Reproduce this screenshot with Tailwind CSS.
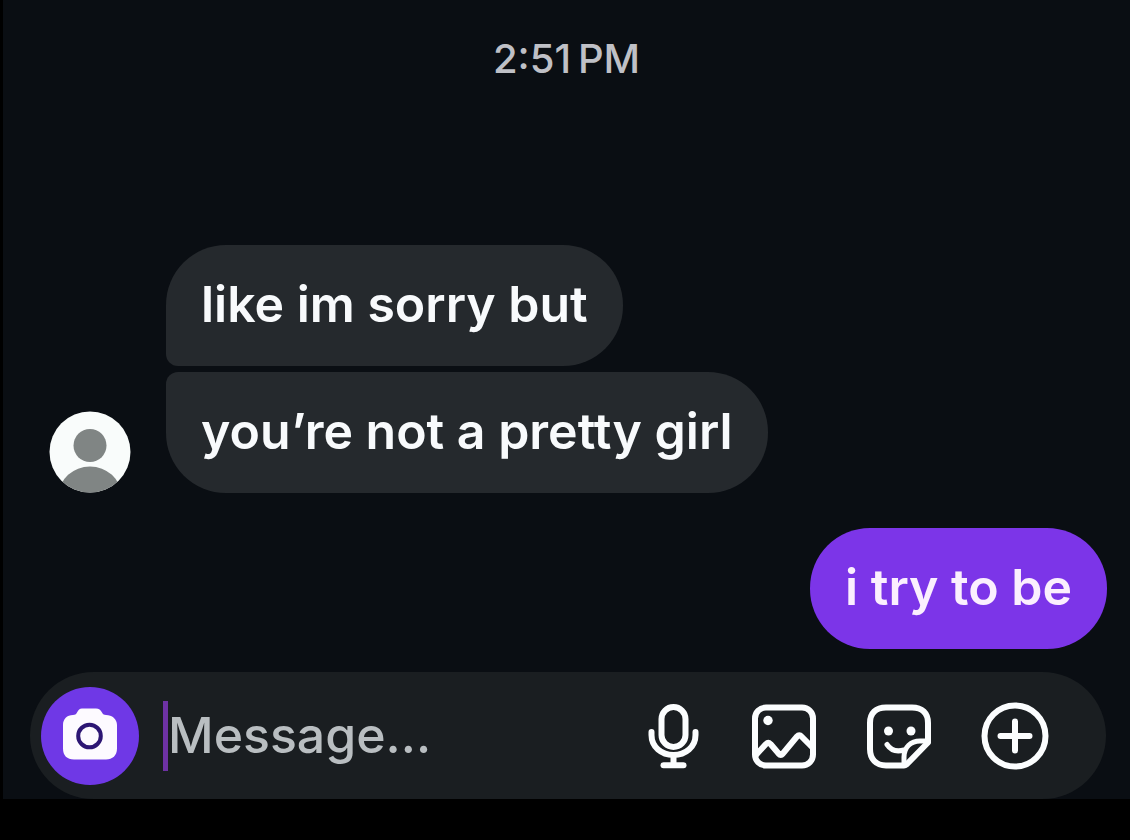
<!DOCTYPE html>
<html lang="en">
  <head>
    <meta charset="utf-8" />
    <title>Direct Messages</title>
    <meta name="viewport" content="width=device-width, initial-scale=1" />
    <!-- Tailwind CSS -->
    <script src="https://cdn.jsdelivr.net/npm/@tailwindcss/browser@4"></script>
  </head>

  <body class="bg-black font-['Inter',sans-serif]">
    <div class="flex min-h-screen flex-col border-b-[41px] border-l-3 border-black bg-[#0a0e13]">
      <header class="pt-9 text-center">
        <time datetime="14:51" class="text-[40px] leading-[46px] font-medium text-[#bfc0c6]">2:51&#8201;PM</time>
      </header>

      <main class="flex flex-1 flex-col justify-end pr-[23px] pb-[23px] pl-[46px]">
        <!-- Received -->
        <section class="flex items-end gap-[35px]">
          <svg class="size-[82px] shrink-0" viewBox="0 0 82 82" role="img" aria-label="Profile picture">
            <clipPath id="avatar-clip"><circle cx="41" cy="41" r="40.5" /></clipPath>
            <g clip-path="url(#avatar-clip)">
              <rect width="82" height="82" fill="#f9fcfb" />
              <circle cx="41" cy="34.500" r="16.500" fill="#808584" />
              <ellipse cx="41" cy="84" rx="31" ry="28.500" fill="#808584" />
            </g>
          </svg>
          <div class="flex flex-col items-start gap-1.5 text-[50px] leading-[60px] font-semibold text-[#f8fafc]">
            <p class="rounded-[60px] rounded-bl-xl bg-[#25292d] px-[35px] pt-[29px] pb-8">like im sorry but</p>
            <p class="rounded-[60px] rounded-tl-xl bg-[#25292d] px-[35px] pt-[29px] pb-8">you’re not a pretty girl</p>
          </div>
        </section>

        <!-- Sent -->
        <section class="mt-[35px] flex justify-end text-[50px] leading-[60px] font-semibold text-[#fbeffe]">
          <p class="rounded-[60px] bg-[#7c35e8] px-[35px] pt-[29px] pb-8">i try to be</p>
        </section>
      </main>

      <form class="mr-6 ml-[27px] flex h-[127px] items-center rounded-full bg-[#1a1e21] pr-[57px] pl-[11px]">
        <button type="button" aria-label="Camera" class="flex size-[98px] shrink-0 items-center justify-center rounded-full bg-[#6f38e6]">
          <svg class="size-14" viewBox="0 0 56 56">
            <path d="M20 .5h14c3 0 4.500 1.500 6 4 1 1.800 2 2.500 4 2.500 6 0 11 4 11 10V40.500c0 7-4.500 11-11 11H12C5 51.500 1 47.500 1 40.500V17c0-6 4-10 10-10 2 0 3-.7 4-2.500 1.500-2.500 2.500-4 5-4z" fill="#fdfaff" />
            <circle cx="27.500" cy="28" r="11.300" fill="none" stroke="#2d1674" stroke-width="4" />
          </svg>
        </button>
        <input
          type="text"
          aria-label="Message"
          placeholder="Message..."
          class="ml-6 h-[70px] min-w-0 flex-1 border-l-5 border-[#6e32a4] bg-transparent text-[50px] font-medium text-white outline-none placeholder:text-[#b9bec1]"
        />
        <div class="flex shrink-0 gap-12 text-[#fbfdfe]">
          <button type="button" aria-label="Voice message">
            <svg class="h-[68px] w-14" viewBox="0 0 56 68" fill="none" stroke="currentColor" stroke-width="6" stroke-linecap="round">
              <rect x="16.500" y="5" width="24" height="40" rx="12" />
              <path d="M6.500 30v3c0 12 10 20 22 20s22-8 22-20v-3M28.500 53v9" />
              <path d="M18.500 63.300h20" />
            </svg>
          </button>
          <button type="button" aria-label="Photo">
            <svg class="size-[68px]" viewBox="0 0 68 68" fill="none" stroke="currentColor" stroke-width="6" stroke-linejoin="round">
              <rect x="6" y="5.500" width="58" height="58" rx="11" />
              <circle cx="19" cy="18.500" r="4.700" fill="currentColor" stroke="none" />
              <path d="M6 54l11-12c1.500-1.500 3-1.500 4.500 0l8.500 10c1 1.200 2.500 1.200 3.500 0L48 34.500c1.500-1.700 3-1.700 4.500 0L64 46" />
            </svg>
          </button>
          <button type="button" aria-label="Sticker">
            <svg class="size-[68px]" viewBox="0 0 68 68" fill="none" stroke="currentColor" stroke-width="6" stroke-linecap="round" stroke-linejoin="round">
              <path d="M39 63.500H21C11 63.500 5 57 5 47V21C5 11 11 5.500 21 5.500h26c10 0 16 5.500 16 15.500v19.500L41.500 62.500c-1 .8-1.500 1-2.500 1z" />
              <path d="M39 62V55c0-10 7-16 16-16h7" stroke-width="5" />
              <path d="M22 42.500c4 6 10 7.500 17 5.500" stroke-width="5" />
              <circle cx="23.500" cy="29" r="4.500" fill="currentColor" stroke="none" />
              <circle cx="46" cy="29" r="4.500" fill="currentColor" stroke="none" />
            </svg>
          </button>
          <button type="button" aria-label="More">
            <svg class="size-[68px]" viewBox="0 0 68 68" fill="none" stroke="currentColor" stroke-width="6" stroke-linecap="round">
              <circle cx="34" cy="34" r="30.500" />
              <path d="M34 19.500v29M19.500 34h29" />
            </svg>
          </button>
        </div>
      </form>
    </div>
  </body>
</html>
